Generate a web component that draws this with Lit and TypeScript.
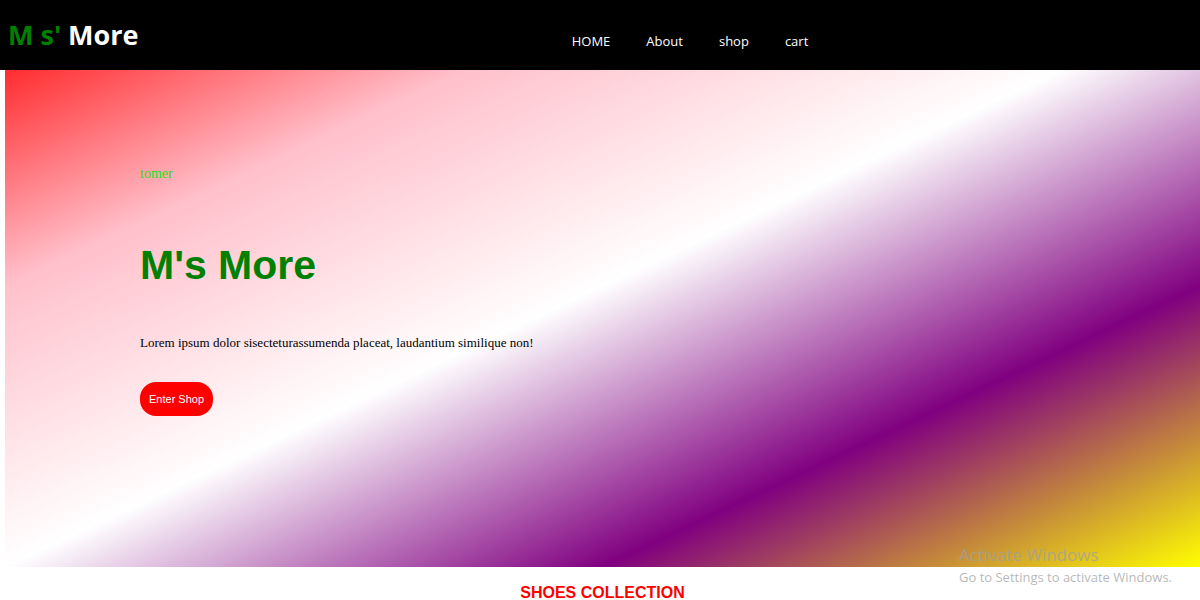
import { LitElement, html, css } from "lit";
import { customElement } from "lit/decorators.js";

@customElement("app-root")
export class AppRoot extends LitElement {
  static styles = css`
    :host {
      display: block;
      position: relative;
      min-height: 100vh;
      overflow: hidden;
      background: #fff;
      color: #000;
      font-family: "Liberation Serif", serif;
      font-size: 14px;
      box-sizing: border-box;
      padding: 5px 0 0 5px;
    }
    .bar {
      position: absolute;
      inset: 0 0 auto 0;
      display: grid;
      grid-template-columns: 1fr auto 1fr;
      align-items: center;
      height: 70px;
      padding: 0 8px;
      box-sizing: border-box;
      background: #000;
      color: #fff;
      font-family: "Open Sans", "Noto Sans", sans-serif;
    }
    .logo {
      font-size: 27px;
      line-height: 36px;
      font-weight: 700;
    }
    .accent {
      color: #008000;
    }
    .links {
      display: flex;
      gap: 36px;
      margin: 0;
      padding: 12px 0 0 180px;
      list-style: none;
    }
    .link {
      color: #fff;
      text-decoration: none;
      font-size: 13px;
      line-height: 20px;
    }
    .hero {
      display: flex;
      flex-direction: column;
      align-items: flex-start;
      box-sizing: border-box;
      min-height: 562px;
      padding: 161px 135px 140px;
      background: linear-gradient(to bottom right, red, pink, white, purple, yellow);
    }
    .ticker {
      margin: 0;
      line-height: 16px;
      color: #20e020;
    }
    .title {
      margin: 57px 0 43px;
      font: 700 41px/52px "Liberation Sans", sans-serif;
      color: #008000;
    }
    .copy {
      margin: 0 0 30px;
      font-size: 13px;
      line-height: 18px;
    }
    .enter {
      border: 0;
      border-radius: 16px;
      padding: 10px 9px;
      background: red;
      color: #fff;
      font: 11px/14px "Liberation Sans", sans-serif;
    }
    .section-title {
      margin: 18px 0 0;
      text-align: center;
      font: 700 16px/16px "Liberation Sans", sans-serif;
      color: red;
    }
    .notice {
      position: absolute;
      right: 28px;
      bottom: 14px;
      color: rgba(160, 160, 160, 0.75);
      font: 13px/20px "Open Sans", "Noto Sans", sans-serif;
      pointer-events: none;
    }
    .notice-title {
      font-size: 17px;
      line-height: 24px;
    }
  `;

  render() {
    return html`
      <main>
        <section class="hero">
          <p class="ticker">tomer</p>
          <h1 class="title">M's More</h1>
          <p class="copy">Lorem ipsum dolor sisecteturassumenda placeat, laudantium similique non!</p>
          <button class="enter" type="button">Enter Shop</button>
        </section>
        <h2 class="section-title">SHOES COLLECTION</h2>
      </main>
      <header class="bar">
        <div class="logo"><span class="accent">M s'</span> More</div>
        <nav>
          <ul class="links">
            <li><a class="link" href="#home">HOME</a></li>
            <li><a class="link" href="#about">About</a></li>
            <li><a class="link" href="#shop">shop</a></li>
            <li><a class="link" href="#cart">cart</a></li>
          </ul>
        </nav>
      </header>
      <aside class="notice">
        <div class="notice-title">Activate Windows</div>
        <div>Go to Settings to activate Windows.</div>
      </aside>
    `;
  }
}
